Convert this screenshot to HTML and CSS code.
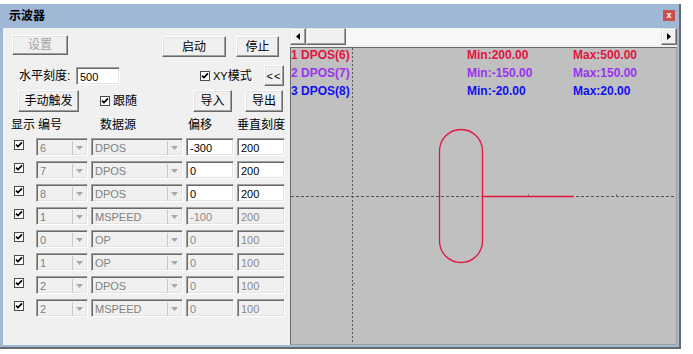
FILE: index.html
```html
<!DOCTYPE html>
<html>
<head>
    <meta charset="UTF-8">
    <meta name="viewport" content="width=device-width, initial-scale=1.0">
    <title>示波器</title>
    <link rel="stylesheet" href="styles.css">
</head>
<body>
    <div class="window">
        <!-- 标题栏 -->
        <div class="titlebar">
            <span class="title">示波器</span>
            <span class="close">x</span>
        </div>

        <div class="client">
            <!-- 左侧设置面板 -->
            <div class="panel">
                <div class="line line-run">
                    <button class="btn btn-set" disabled>设置</button>
                    <button class="btn btn-start">启动</button>
                    <button class="btn btn-stop">停止</button>
                </div>

                <div class="line line-scale">
                    <span class="lbl">水平刻度:</span>
                    <span class="field field-scale">500</span>
                    <span class="check check-xy">
                        <span class="cb"><svg viewBox="0 0 8 8" width="8" height="8"><path d="M1 3.6 L3 5.6 L7 1.4"/></svg></span>
                        <span><span class="latin">XY</span>模式</span>
                    </span>
                    <button class="btn btn-fold">&lt;&lt;</button>
                </div>

                <div class="line line-trig">
                    <button class="btn btn-trig">手动触发</button>
                    <span class="check check-follow">
                        <span class="cb"><svg viewBox="0 0 8 8" width="8" height="8"><path d="M1 3.6 L3 5.6 L7 1.4"/></svg></span>
                        <span>跟随</span>
                    </span>
                    <button class="btn btn-in">导入</button>
                    <button class="btn btn-out">导出</button>
                </div>

                <div class="table" id="table">
                    <span class="th th-show">显示</span>
                    <span class="th th-num">编号</span>
                    <span class="th th-src">数据源</span>
                    <span class="th th-off">偏移</span>
                    <span class="th th-scale">垂直刻度</span>
                </div>
            </div>

            <!-- 右侧波形区 -->
            <div class="scope">
                <div class="hscroll">
                    <span class="sb-btn sb-arrow">
                        <svg viewBox="0 0 4 7" width="4" height="7"><path d="M4 0 L0 3.5 L4 7 Z"/></svg>
                    </span>
                    <span class="sb-btn sb-thumb"></span>
                    <span class="sb-track"></span>
                    <span class="sb-btn sb-arrow">
                        <svg viewBox="0 0 4 7" width="4" height="7"><path d="M0 0 L4 3.5 L0 7 Z"/></svg>
                    </span>
                </div>

                <div class="plot">
                    <svg class="wave" width="385" height="296" viewBox="0 0 385 296">
                        <line x1="61.5" y1="0" x2="61.5" y2="296" class="axis" stroke-dasharray="2 2"/>
                        <line x1="0" y1="148.5" x2="385" y2="148.5" class="axis" stroke-dasharray="3 2"/>
                        <line x1="237.5" y1="146" x2="237.5" y2="148" class="tick"/>
                        <line x1="325.5" y1="146" x2="325.5" y2="148" class="tick"/>
                        <line x1="62" y1="235.5" x2="64" y2="235.5" class="tick"/>
                        <rect x="148.5" y="81.5" width="43" height="133" rx="21.5" class="trace"/>
                        <line x1="191.5" y1="148.5" x2="282" y2="148.5" class="trace trace-line"/>
                    </svg>

                    <div class="legend">
                        <span class="c1">1 DPOS(6)</span><span class="c1">Min:200.00</span><span class="c1">Max:500.00</span>
                        <span class="c2">2 DPOS(7)</span><span class="c2">Min:-150.00</span><span class="c2">Max:150.00</span>
                        <span class="c3">3 DPOS(8)</span><span class="c3">Min:-20.00</span><span class="c3">Max:20.00</span>
                    </div>
                </div>
            </div>
        </div>
    </div>

<script>
document.addEventListener('DOMContentLoaded', () => {
    // 通道数据：编号、数据源、偏移、垂直刻度、是否可编辑
    const channels = [
        { num: '6', src: 'DPOS',   offset: '-300', scale: '200', edit: true },
        { num: '7', src: 'DPOS',   offset: '0',    scale: '200', edit: true },
        { num: '8', src: 'DPOS',   offset: '0',    scale: '200', edit: true },
        { num: '1', src: 'MSPEED', offset: '-100', scale: '200', edit: false },
        { num: '0', src: 'OP',     offset: '0',    scale: '100', edit: false },
        { num: '1', src: 'OP',     offset: '0',    scale: '100', edit: false },
        { num: '2', src: 'DPOS',   offset: '0',    scale: '100', edit: false },
        { num: '2', src: 'MSPEED', offset: '0',    scale: '100', edit: false }
    ];

    const check = '<span class="cb"><svg viewBox="0 0 8 8" width="8" height="8"><path d="M1 3.6 L3 5.6 L7 1.4"/></svg></span>';
    const drop = '<span class="drop"><svg viewBox="0 0 7 4" width="7" height="4"><path d="M0 0 L7 0 L3.5 4 Z"/></svg></span>';

    let html = '';
    channels.forEach(ch => {
        const state = ch.edit ? '' : ' is-disabled';
        html += `
            <div class="tr">
                <span class="cell-check">${check}</span>
                <span class="combo"><span class="val">${ch.num}</span>${drop}</span>
                <span class="combo"><span class="val">${ch.src}</span>${drop}</span>
                <span class="field${state}">${ch.offset}</span>
                <span class="field${state}">${ch.scale}</span>
            </div>
        `;
    });
    document.getElementById('table').insertAdjacentHTML('beforeend', html);
});
</script>
</body>
</html>
```

FILE: styles.css
```css
* {
    box-sizing: border-box;
    margin: 0;
    padding: 0;
}

body {
    background: #fff;
    width: 693px;
    height: 354px;
    overflow: hidden;
    font-family: "Liberation Sans", "Noto Sans CJK SC", sans-serif;
    font-size: 12px;
    color: #000;
}

.window {
    margin-top: 4px;
    width: 681px;
    height: 345px;
    background: #9fb8d6;
    border-right: 2px solid #6a6a6a;
    border-bottom: 2px solid #6a6a6a;
    display: flex;
    flex-direction: column;
}

/* 标题栏 */
.titlebar {
    height: 24px;
    display: flex;
    align-items: center;
    justify-content: space-between;
    padding: 0 4px 0 9px;
}

.title {
    font-weight: bold;
    font-size: 12px;
    line-height: 14px;
}

.close {
    width: 12px;
    height: 11px;
    margin-top: -1px;
    background: #c75050;
    color: #fff;
    font-size: 9px;
    font-weight: bold;
    line-height: 10px;
    text-align: center;
}

.client {
    height: 317px;
    margin: 0 2px 0 3px;
    background: #f0f0f0;
    display: flex;
}

/* 左侧面板 */
.panel {
    width: 287px;
    padding-top: 7px;
}

.line {
    display: flex;
    align-items: center;
}

.line-run {
    height: 22px;
}

.line-scale {
    height: 21px;
    margin-top: 8px;
}

.line-trig {
    height: 22px;
    margin-top: 4px;
}

.btn {
    height: 100%;
    background: #f0f0f0;
    border: 1px solid;
    border-color: #fff #696969 #696969 #fff;
    box-shadow: inset -1px -1px #a0a0a0, inset 1px 1px #e3e3e3;
    font-family: inherit;
    font-size: 12px;
    line-height: 14px;
    color: #000;
    display: flex;
    align-items: center;
    justify-content: center;
}

.btn:disabled {
    color: #a0a0a0;
}

.btn-set   { width: 56px; margin-left: 9px; height: 20px; align-self: flex-start; }
.btn-start { width: 64px; margin-left: 94px; height: 21px; align-self: flex-end; }
.btn-stop  { width: 43px; margin-left: 10px; height: 21px; align-self: flex-end; }

.lbl {
    width: 57px;
    margin-left: 16px;
    line-height: 14px;
}

.field-scale {
    width: 44px;
    background: #fff;
}

.check {
    display: flex;
    align-items: center;
    gap: 3px;
    line-height: 14px;
}

.latin {
    font-size: 11px;
}

.check-xy {
    width: 64px;
    margin-left: 80px;
}

.btn-fold {
    width: 20px;
    font-size: 11px;
    letter-spacing: 1px;
}

.btn-trig   { width: 61px; margin-left: 15px; }
.check-follow {
    width: 93px;
    margin-left: 21px;
}
.btn-in  { width: 39px; }
.btn-out { width: 38px; margin-left: 13px; }

/* 复选框 */
.cb {
    width: 10px;
    height: 10px;
    background: #fff;
    border: 1px solid #4a4a4a;
    display: flex;
    align-items: center;
    justify-content: center;
    flex: none;
}

.cb path {
    fill: none;
    stroke: #000;
    stroke-width: 1.7;
}

/* 通道表 */
.table {
    margin-top: 6px;
    padding-left: 11px;
    display: grid;
    grid-template-columns: 19px 52px 92px 48px 48px;
    grid-template-rows: 15px repeat(8, 18px);
    column-gap: 3px;
    row-gap: 5px;
}

.tr {
    display: contents;
}

.th {
    line-height: 15px;
    white-space: nowrap;
}

.th-show  { margin-left: -3px; }
.th-num   { padding-left: 2px; }
.th-src   { padding-left: 9px; }
.th-off   { padding-left: 2px; }

.cell-check {
    padding-top: 2px;
}

.field,
.combo {
    height: 18px;
    border: 1px solid;
    border-color: #a0a0a0 #fff #fff #a0a0a0;
    box-shadow: inset 1px 1px #696969, inset -1px -1px #e3e3e3;
    font-size: 11px;
    line-height: 14px;
    padding: 2px 3px;
    white-space: nowrap;
    overflow: hidden;
}

.field {
    background: #fff;
}

.field.is-disabled {
    background: #f0f0f0;
    color: #8a8a8a;
}

.combo {
    background: #f0f0f0;
    color: #808080;
    display: flex;
    padding-right: 1px;
}

.combo .val {
    flex: 1;
}

.drop {
    width: 14px;
    height: 14px;
    border-left: 1px solid #c8c8c8;
    display: flex;
    align-items: center;
    justify-content: center;
    flex: none;
}

.drop path {
    fill: #a8a8a8;
}

/* 波形区 */
.scope {
    width: 387px;
    display: flex;
    flex-direction: column;
}

.hscroll {
    height: 19px;
    display: flex;
    padding-bottom: 2px;
    background: #f0f0f0;
}

.sb-btn {
    background: #f0f0f0;
    border: 1px solid;
    border-color: #e3e3e3 #696969 #696969 #e3e3e3;
    box-shadow: inset -1px -1px #a0a0a0, inset 1px 1px #fff;
}

.sb-arrow {
    width: 16px;
    display: flex;
    align-items: center;
    justify-content: center;
}

.sb-thumb {
    width: 40px;
}

.sb-track {
    flex: 1;
    background: repeating-conic-gradient(#fff 0 25%, #f0f0f0 0 50%) 0 0 / 2px 2px;
}

.plot {
    flex: 1;
    position: relative;
    background: #c0c0c0;
    border-top: 1px solid #6a6a6a;
    border-left: 1px solid #6a6a6a;
    border-right: 1px solid #a0a0a0;
    border-bottom: 1px solid #a0a0a0;
}

.wave {
    position: absolute;
    left: 0;
    top: 0;
}

.axis {
    stroke: #555;
    stroke-width: 1;
}

.tick {
    stroke: #777;
    stroke-width: 1;
}

.trace {
    fill: none;
    stroke: #e2143f;
    stroke-width: 1.3;
}

.trace-line {
    stroke-width: 1.6;
}

.legend {
    position: relative;
    margin-top: -2px;
    display: grid;
    grid-template-columns: 176px 106px 1fr;
    font-weight: bold;
    font-size: 12px;
    line-height: 18px;
    white-space: nowrap;
}

.c1 { color: #e2143f; }
.c2 { color: #9933ee; }
.c3 { color: #1010f0; }
```
